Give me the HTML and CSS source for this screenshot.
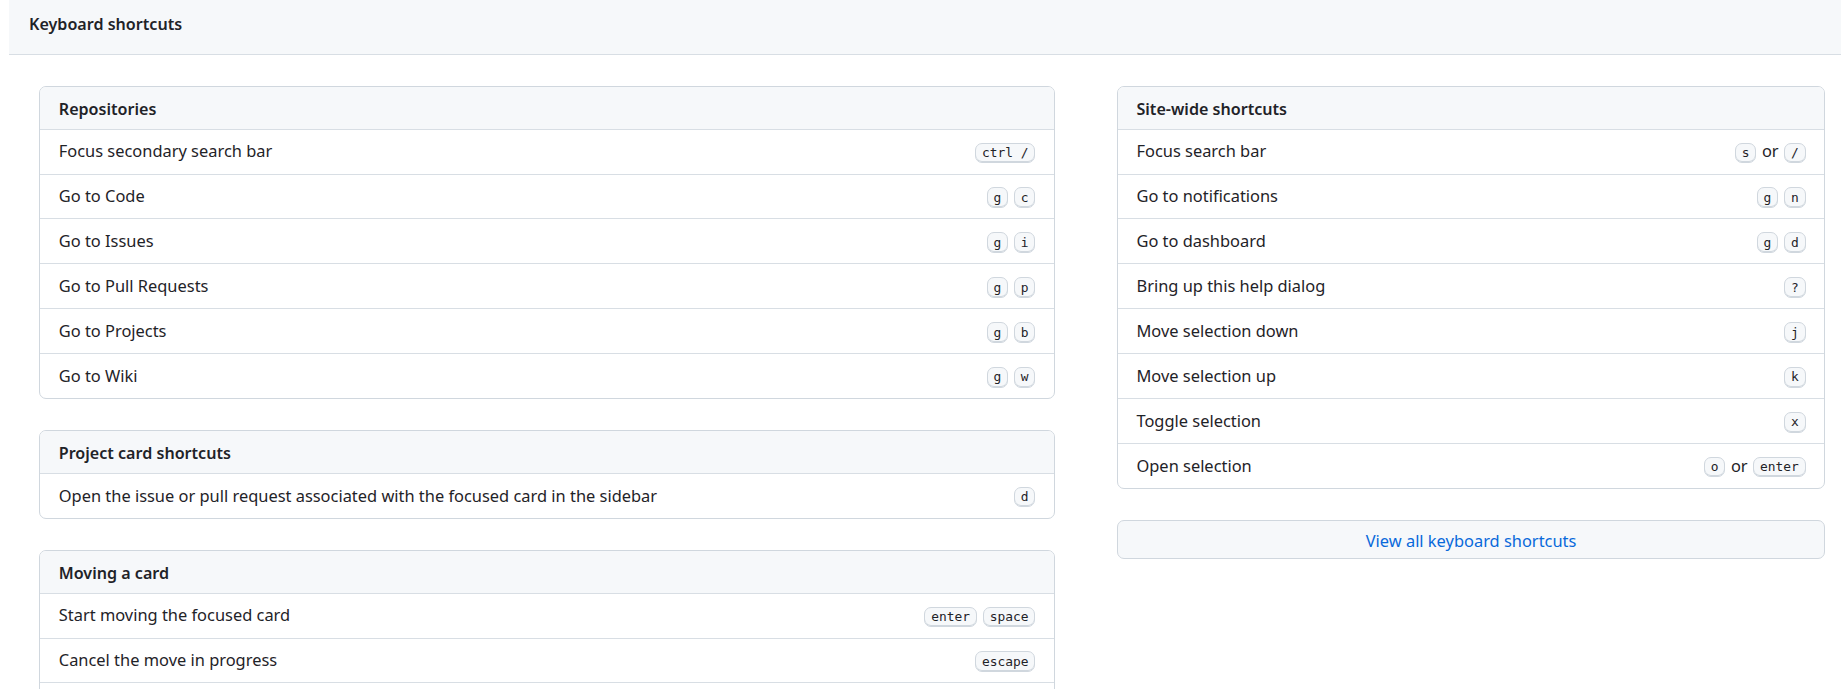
FILE: index.html
```html
<!DOCTYPE html>
<html lang="en">
<head>
<meta charset="utf-8">
<title>Keyboard shortcuts</title>
<link rel="stylesheet" href="styles.css">
</head>
<body>
<header class="page-header">
  <h1 class="page-title">Keyboard shortcuts</h1>
</header>
<main class="columns">
  <div class="col">
    <section class="box">
      <div class="box-header"><h2 class="box-title">Repositories</h2></div>
      <ul class="box-list">
        <li class="row"><span class="row-label">Focus secondary search bar</span><span class="row-keys"><kbd class="kbd">ctrl /</kbd></span></li>
        <li class="row"><span class="row-label">Go to Code</span><span class="row-keys"><kbd class="kbd">g</kbd><kbd class="kbd">c</kbd></span></li>
        <li class="row"><span class="row-label">Go to Issues</span><span class="row-keys"><kbd class="kbd">g</kbd><kbd class="kbd">i</kbd></span></li>
        <li class="row"><span class="row-label">Go to Pull Requests</span><span class="row-keys"><kbd class="kbd">g</kbd><kbd class="kbd">p</kbd></span></li>
        <li class="row"><span class="row-label">Go to Projects</span><span class="row-keys"><kbd class="kbd">g</kbd><kbd class="kbd">b</kbd></span></li>
        <li class="row"><span class="row-label">Go to Wiki</span><span class="row-keys"><kbd class="kbd">g</kbd><kbd class="kbd">w</kbd></span></li>
      </ul>
    </section>
    <section class="box">
      <div class="box-header"><h2 class="box-title">Project card shortcuts</h2></div>
      <ul class="box-list">
        <li class="row"><span class="row-label">Open the issue or pull request associated with the focused card in the sidebar</span><span class="row-keys"><kbd class="kbd">d</kbd></span></li>
      </ul>
    </section>
    <section class="box">
      <div class="box-header"><h2 class="box-title">Moving a card</h2></div>
      <ul class="box-list">
        <li class="row"><span class="row-label">Start moving the focused card</span><span class="row-keys"><kbd class="kbd">enter</kbd><kbd class="kbd">space</kbd></span></li>
        <li class="row"><span class="row-label">Cancel the move in progress</span><span class="row-keys"><kbd class="kbd">escape</kbd></span></li>
        <li class="row"><span class="row-label">Complete the move of the focused card</span><span class="row-keys"><kbd class="kbd">enter</kbd></span></li>
        <li class="row"><span class="row-label">Move card down</span><span class="row-keys"><kbd class="kbd">j</kbd></span></li>
        <li class="row"><span class="row-label">Move card up</span><span class="row-keys"><kbd class="kbd">k</kbd></span></li>
      </ul>
    </section>
  </div>
  <div class="col">
    <section class="box">
      <div class="box-header"><h2 class="box-title">Site-wide shortcuts</h2></div>
      <ul class="box-list">
        <li class="row"><span class="row-label">Focus search bar</span><span class="row-keys"><kbd class="kbd">s</kbd><span class="or">or</span><kbd class="kbd">/</kbd></span></li>
        <li class="row"><span class="row-label">Go to notifications</span><span class="row-keys"><kbd class="kbd">g</kbd><kbd class="kbd">n</kbd></span></li>
        <li class="row"><span class="row-label">Go to dashboard</span><span class="row-keys"><kbd class="kbd">g</kbd><kbd class="kbd">d</kbd></span></li>
        <li class="row"><span class="row-label">Bring up this help dialog</span><span class="row-keys"><kbd class="kbd">?</kbd></span></li>
        <li class="row"><span class="row-label">Move selection down</span><span class="row-keys"><kbd class="kbd">j</kbd></span></li>
        <li class="row"><span class="row-label">Move selection up</span><span class="row-keys"><kbd class="kbd">k</kbd></span></li>
        <li class="row"><span class="row-label">Toggle selection</span><span class="row-keys"><kbd class="kbd">x</kbd></span></li>
        <li class="row"><span class="row-label">Open selection</span><span class="row-keys"><kbd class="kbd">o</kbd><span class="or">or</span><kbd class="kbd">enter</kbd></span></li>
      </ul>
    </section>
    <a class="view-all" href="#">View all keyboard shortcuts</a>
  </div>
</main>
</body>
</html>
```
FILE: styles.css
```css
* { box-sizing: border-box; }
html, body { overflow: hidden; height: 100%; }
body {
  margin: 0 0 0 9.4px;
  font-family: "Noto Sans", sans-serif;
  font-size: 16.42px;
  color: #1f2328;
  background: #ffffff;
}
.page-header {
  background: #f6f8fa;
  border-bottom: 1px solid #d8dee4;
  padding: 12px 19.6px 17.4px;
}
.page-title {
  margin: 0;
  font-size: 16.1px;
  font-weight: 600;
  line-height: 24.6px;
}
.columns {
  display: grid;
  grid-template-columns: 1016.3px 708.8px;
  column-gap: 61.4px;
  padding: 31px 0 0 29.6px;
  align-items: start;
}
.col {
  display: flex;
  flex-direction: column;
  gap: 31.2px;
}
.box {
  border: 1px solid #d0d7de;
  border-radius: 7px;
  overflow: hidden;
}
.box-header {
  background: #f6f8fa;
  padding: 10px 18.8px 7px;
  border-bottom: 1px solid #d8dee4;
}
.box-title {
  margin: 0;
  font-size: 16.1px;
  font-weight: 600;
  line-height: 24.7px;
}
.box-list {
  list-style: none;
  margin: 0;
  padding: 0;
}
.row {
  display: flex;
  padding: 9.6px 18.8px;
  line-height: 24.7px;
}
.row + .row { border-top: 1px solid #d8dee4; }
.row-label { flex: 1 1 auto; }
.row-keys { margin-left: 9.4px; white-space: nowrap; }
.kbd {
  display: inline-block;
  padding: 3.5px 5.9px;
  font: 12.9px/11.7px "DejaVu Sans Mono", monospace;
  color: #1f2328;
  vertical-align: middle;
  background: #f6f8fa;
  border: 1px solid #d0d7de;
  border-radius: 7px;
  box-shadow: inset 0 -1px 0 #d0d7de;
}
.kbd + .kbd { margin-left: 5.9px; }
.or { margin: 0 5.5px; }
.view-all {
  display: block;
  padding: 7.5px 16px 4.5px;
  line-height: 24.7px;
  text-align: center;
  background: #f6f8fa;
  border: 1px solid #d0d7de;
  border-radius: 7px;
  color: #0969da;
  text-decoration: none;
}
```
